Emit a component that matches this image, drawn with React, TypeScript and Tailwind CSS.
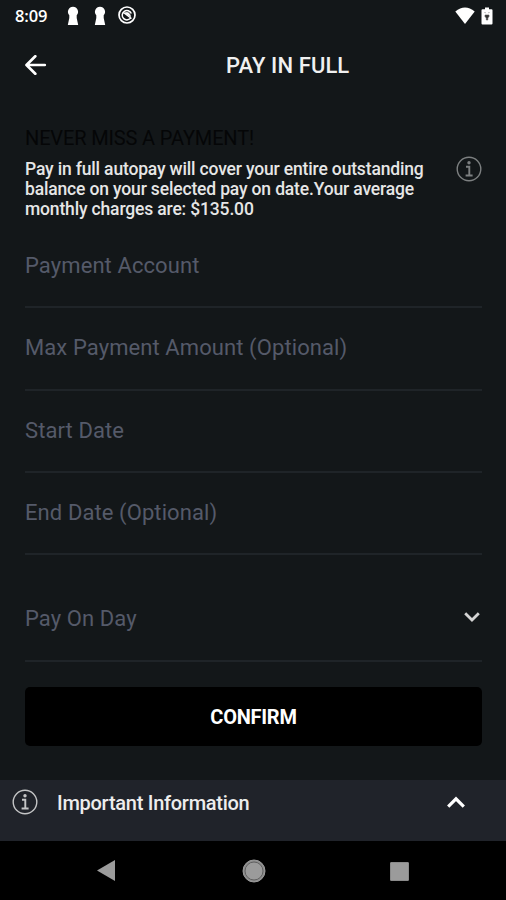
import React from "react";

function InfoIcon({ className }: { className: string }) {
  return (
    <svg viewBox="0 0 26 26" className={className} fill="none" stroke="currentColor">
      <circle cx="13" cy="13" r="11.8" strokeWidth="1.4" />
      <circle cx="13" cy="6.7" r="1.7" fill="currentColor" stroke="none" />
      <path d="M10 10.700h3.300v8.500M9.600 19.500h7" strokeWidth="1.9" />
    </svg>
  );
}

function Keyhole() {
  return (
    <svg viewBox="0 0 12 20" className="h-5 w-3 fill-white">
      <path d="M6 .8a5 5 0 0 1 3.700 8.400V12l1.500 7H.8l1.500-7V9.200A5 5 0 0 1 6 .8z" />
    </svg>
  );
}

function StatusBar() {
  return (
    <div className="flex h-8 items-center text-white">
      <span className="ml-[15px] w-[52px] font-['Open_Sans',sans-serif] text-[16.500px] leading-5 font-semibold tracking-[-0.1px]">8:09</span>
      <Keyhole />
      <div className="ml-[15px]">
        <Keyhole />
      </div>
      <svg viewBox="0 0 18 18" className="mb-[2px] ml-[12px] h-[18px] w-[18px]" fill="none" stroke="white">
        <circle cx="9" cy="9" r="8" strokeWidth="1.700" />
        <path d="M13 11.500A4.700 4.700 0 1 1 13.300 7.500M5.500 6.500l8 6" strokeWidth="1.500" />
        <path d="M7 7c2.500-1.200 5 0 5.500 3.500z" fill="white" strokeWidth=".8" />
      </svg>
      <svg viewBox="0 0 20 18" className="mb-[1px] ml-auto h-[18px] w-5 fill-white">
        <path d="M.3 4.500Q10-3.300 19.700 4.500L10 17z" />
      </svg>
      <svg viewBox="0 0 12 18" className="mb-[1px] mr-[13px] ml-[6px] h-[18px] w-3">
        <path d="M4 .5h4v1.700h2.500a1 1 0 0 1 1 1v13.300a1 1 0 0 1-1 1h-9a1 1 0 0 1-1-1V3.200a1 1 0 0 1 1-1H4z" fill="white" />
        <path d="M3.700 5l.8 1.200M8.300 5l-.8 1.200M4 8h4v1.500L6.800 11v2H5.300v-2L4 9.500z" fill="#333" stroke="#555" strokeWidth=".6" />
      </svg>
    </div>
  );
}

function Field({ label }: { label: string }) {
  return (
    <div className="h-[82.3px] border-b-2 border-[#1f2428] pt-[25px]">
      <div className="text-[22px] leading-[29px] tracking-[0.09px] whitespace-nowrap text-[#555a69]">{label}</div>
    </div>
  );
}

export default function App() {
  return (
    <div className="flex h-[900px] w-[506px] flex-col overflow-hidden bg-[#131719] font-['Roboto',sans-serif]">
      <StatusBar />
      <header className="flex h-[66px] items-center">
        <svg viewBox="0 0 22 20" className="mb-[1px] ml-[25px] h-5 w-[22px]" fill="none" stroke="white" strokeWidth="2.700" strokeLinecap="round" strokeLinejoin="round">
          <path d="M10.300 1.300L1.500 10l8.800 8.700M1.800 10h18" />
        </svg>
        <h1 className="mt-[2px] ml-[179px] text-[22px] leading-[26px] font-medium tracking-[0.1px] whitespace-nowrap text-[#f0f0f0]">PAY IN FULL</h1>
      </header>
      <main className="pr-6 pl-[25px]">
        <h2 className="mt-[28px] text-[20px] leading-6 tracking-[-0.14px] whitespace-nowrap text-[#050607]">NEVER MISS A PAYMENT!</h2>
        <div className="mt-[9px] flex h-[67px] justify-between">
          <p className="text-[17.500px] leading-5 font-medium tracking-[-0.160px] whitespace-nowrap text-[#e6e6e6]">
            Pay in full autopay will cover your entire outstanding
            <br />
            balance on your selected pay on date.Your average
            <br />
            monthly charges are: $135.00
          </p>
          <InfoIcon className="mt-[-3px] h-[26px] w-[26px] text-[#7d8081]" />
        </div>
        <Field label="Payment Account" />
        <Field label="Max Payment Amount (Optional)" />
        <Field label="Start Date" />
        <Field label="End Date (Optional)" />
        <div className="flex h-[107px] items-start justify-between border-b-2 border-[#1f2428] pt-[49px]">
          <div className="text-[22px] leading-[30px] tracking-[0.09px] text-[#555a69]">Pay On Day</div>
          <svg viewBox="0 0 16 10" className="mt-[8px] mr-[2px] h-[10px] w-4" fill="none" stroke="#d4d4d4" strokeWidth="2.800">
            <path d="M1.200 1.200L8 8l6.800-6.800" />
          </svg>
        </div>
        <button className="mt-[25px] flex h-[59px] w-full items-center justify-center rounded-[5px] bg-black pt-[1px] text-[20px] font-bold tracking-[-0.250px] text-white">CONFIRM</button>
      </main>
      <div className="mt-auto flex h-[61px] items-start bg-[#20232a] pt-[9px]">
        <InfoIcon className="ml-[12px] h-[26px] w-[26px] text-[#c4c5c6]" />
        <span className="ml-[19px] text-[20px] leading-[28px] font-medium tracking-[-0.270px] whitespace-nowrap text-[#ededed]">Important Information</span>
        <svg viewBox="0 0 18 12" className="mt-[7px] mr-[41px] ml-auto h-3 w-[18px]" fill="none" stroke="white" strokeWidth="3.200">
          <path d="M1.200 10.600L9 2.800l7.800 7.800" />
        </svg>
      </div>
      <nav className="flex h-[59px] items-center bg-black">
        <svg viewBox="0 0 18 21" className="ml-[97px] h-[21px] w-[18px] fill-[#9b9b9b]">
          <path d="M18 0v21L0 10.500z" />
        </svg>
        <svg viewBox="0 0 24 24" className="ml-[127px] h-6 w-6">
          <circle cx="12" cy="12" r="11" fill="#8d8d8d" stroke="#9b9b9b" />
          <circle cx="12" cy="12" r="9" fill="#9b9b9b" stroke="#5a5a5a" strokeWidth=".9" />
        </svg>
        <div className="mt-[1px] ml-[124px] h-[19px] w-[19px] rounded-[1px] border border-[#8a8a8a] bg-[#9b9b9b]" />
      </nav>
    </div>
  );
}
